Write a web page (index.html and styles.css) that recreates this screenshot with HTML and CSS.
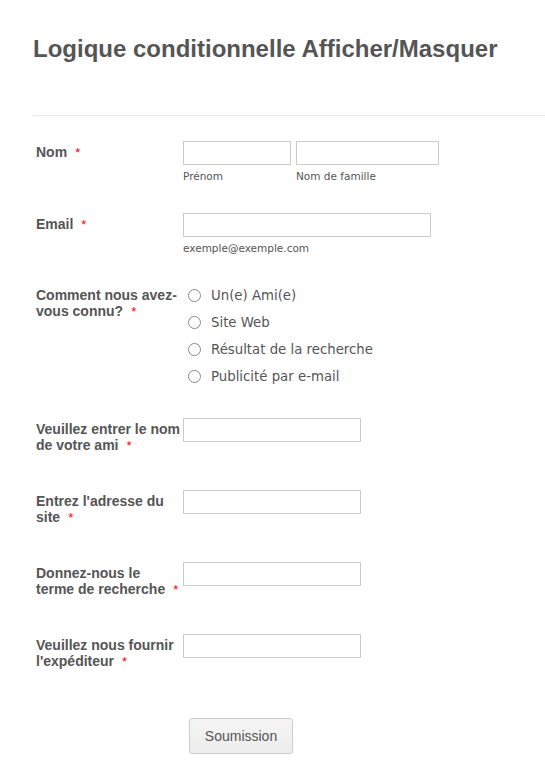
FILE: index.html
```html
<!DOCTYPE html>
<html lang="fr">
<head>
<meta charset="utf-8">
<title>Logique conditionnelle Afficher/Masquer</title>
<link rel="stylesheet" href="styles.css">
</head>
<body>
<form class="form">
  <h1 class="form-title">Logique conditionnelle Afficher/Masquer</h1>
  <hr class="divider">
  <ul class="lines">
    <li class="line">
      <label class="qlabel">Nom<span class="req">*</span></label>
      <div class="field">
        <div class="name-group">
          <span class="sub-wrap"><input class="text first" type="text"><span class="sublabel">Prénom</span></span>
          <span class="sub-wrap"><input class="text last" type="text"><span class="sublabel">Nom de famille</span></span>
        </div>
      </div>
    </li>
    <li class="line">
      <label class="qlabel">Email<span class="req">*</span></label>
      <div class="field">
        <span class="sub-wrap"><input class="text email" type="text"><span class="sublabel">exemple@exemple.com</span></span>
      </div>
    </li>
    <li class="line line-radio">
      <label class="qlabel">Comment nous avez-vous connu?<span class="req">*</span></label>
      <div class="field options">
        <label class="option"><input type="radio" name="src" class="radio"><span>Un(e) Ami(e)</span></label>
        <label class="option"><input type="radio" name="src" class="radio"><span>Site Web</span></label>
        <label class="option"><input type="radio" name="src" class="radio"><span>Résultat de la recherche</span></label>
        <label class="option"><input type="radio" name="src" class="radio"><span>Publicité par e-mail</span></label>
      </div>
    </li>
    <li class="line">
      <label class="qlabel">Veuillez entrer le nom de votre ami<span class="req">*</span></label>
      <div class="field"><input class="text short" type="text"></div>
    </li>
    <li class="line">
      <label class="qlabel">Entrez l'adresse du site<span class="req">*</span></label>
      <div class="field"><input class="text short" type="text"></div>
    </li>
    <li class="line">
      <label class="qlabel">Donnez-nous le terme de recherche<span class="req">*</span></label>
      <div class="field"><input class="text short" type="text"></div>
    </li>
    <li class="line">
      <label class="qlabel">Veuillez nous fournir l'expéditeur<span class="req">*</span></label>
      <div class="field"><input class="text short" type="text"></div>
    </li>
    <li class="button-line">
      <button type="button" class="submit">Soumission</button>
    </li>
  </ul>
</form>
</body>
</html>
```
FILE: styles.css
```css
* { box-sizing: border-box; }
html, body { margin: 0; padding: 0; background: #fff; }
body { font-family: "Liberation Sans", Arial, sans-serif; color: #555; }

.form { padding: 34px 0 0 33px; }

.form-title {
  margin: 0;
  font-size: 24px;
  line-height: 29px;
  font-weight: bold;
  color: #555;
}

.divider {
  margin: 52px 0 0 0;
  border: 0;
  border-top: 1px solid #e6e6e6;
  height: 0;
}

.lines { list-style: none; margin: 0; padding: 25px 0 0 3px; }

.line {
  display: flex;
  align-items: flex-start;
  min-height: 72px;
}

.line-radio { min-height: 134px; margin-top: -1px; }

.qlabel {
  width: 147px;
  flex: none;
  padding: 3px 2px 0 0;
  font-size: 14px;
  line-height: 16px;
  font-weight: bold;
  color: #555;
}

.req {
  color: #f00;
  font-weight: normal;
  margin-left: 8px;
  font-size: 13px;
}

.field { display: flex; }

.name-group { display: flex; gap: 5px; }

.sub-wrap { display: flex; flex-direction: column; }

.text {
  height: 24px;
  border: 1px solid #ccc;
  background: #fff;
  padding: 0 4px;
  margin: 0;
  font: 13px "DejaVu Sans", Verdana, sans-serif;
  border-radius: 0;
}
.text.first { width: 108px; }
.text.last { width: 143px; }
.text.email { width: 248px; }
.text.short { width: 178px; }

.sublabel {
  margin-top: 5px;
  font-family: "DejaVu Sans", Verdana, sans-serif;
  font-size: 10.5px;
  line-height: 13px;
  color: #555;
}

.options { flex-direction: column; gap: 5px; }

.option {
  display: flex;
  align-items: center;
  height: 22px;
  font-family: "DejaVu Sans", Verdana, sans-serif;
  font-size: 13.3px;
  color: #555;
}

.radio {
  -webkit-appearance: none;
  appearance: none;
  width: 13px;
  height: 13px;
  margin: 0 10px 0 5px;
  border: 1px solid #888;
  border-radius: 50%;
  background: #fff;
}

.button-line { padding: 12px 0 0 153px; }

.submit {
  width: 104px;
  height: 36px;
  border: 1px solid #ccc;
  border-radius: 3px;
  background: linear-gradient(#f5f5f5, #ececec);
  box-shadow: 0 1px 1px rgba(0,0,0,0.08);
  font-family: "Liberation Sans", Arial, sans-serif;
  font-size: 14px;
  color: #555;
  padding: 0;
}
```
